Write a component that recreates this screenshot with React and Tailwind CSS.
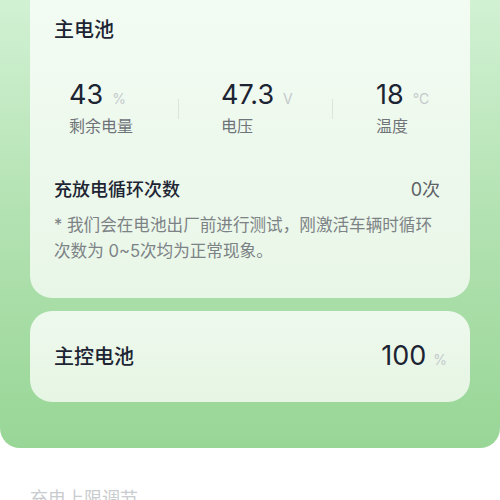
const font = { fontFamily: '"Inter", "Noto Sans CJK SC", sans-serif' };

const Stat = ({ value, unit, label, className }) => (
  <div className={`flex flex-col shrink-0 ${className}`}>
    <div className="flex items-baseline gap-[9px] h-[32px]">
      <span className="text-[27px] leading-[32px] text-[#1c2333]">{value}</span>
      <span className="text-[14px] text-[#c4c9cc]">{unit}</span>
    </div>
    <span className="mt-[4px] text-[16px] leading-[22px] text-[#6f7478]">{label}</span>
  </div>
);

const Divider = () => <div className="w-px h-[20px] shrink-0 bg-[#dde3dd] self-center mt-[2px]" />;

export default function App() {
  return (
    <div className="w-[500px] h-[500px] overflow-hidden bg-white" style={font}>
      <div className="bg-gradient-to-b from-[#d5f3d7] via-[#b3e2b2] to-[#98d696] rounded-b-[20px] px-[30px] pb-[46px]">
        <div className="-mt-[24px] rounded-[22px] bg-gradient-to-b from-[#f4fcf4] to-[#e8f6e7] pt-[40px] pb-[34px] pl-[24px] pr-[30px]">
          <div className="text-[20px] leading-[28px] font-medium text-[#1d2433]">主电池</div>

          <div className="mt-[35px] pl-[15px] flex">
            <Stat value="43" unit="%" label="剩余电量" className="w-[109px]" />
            <Divider />
            <Stat value="47.3" unit="V" label="电压" className="ml-[42px] w-[111px]" />
            <Divider />
            <Stat value="18" unit="°C" label="温度" className="ml-[43px] flex-1" />
          </div>

          <div className="mt-[39px] flex justify-between items-center h-[26px]">
            <span className="text-[18px] font-medium text-[#1d2433]">充放电循环次数</span>
            <span className="text-[18px] text-[#5c6166]">0次</span>
          </div>

          <p className="mt-[10px] text-[16.6px] leading-[26px] text-[#7d8286]">
            <span className="block">* 我们会在电池出厂前进行测试，刚激活车辆时循环</span>
            <span className="block">次数为 0~5次均为正常现象。</span>
          </p>
        </div>

        <div className="mt-[13px] h-[91px] rounded-[22px] bg-gradient-to-b from-[#eef9ed] to-[#e6f5e4] pl-[24px] pr-[23px] flex items-center justify-between">
          <span className="text-[20px] font-medium text-[#1d2433]">主控电池</span>
          <div className="flex items-baseline gap-[7px]">
            <span className="text-[27px] text-[#1c2333]">100</span>
            <span className="text-[14px] text-[#c4c9cc]">%</span>
          </div>
        </div>
      </div>

      <div className="mt-[38px] pl-[30px] text-[18px] leading-[26px] text-[#c9cccf]">充电上限调节</div>
    </div>
  );
}
